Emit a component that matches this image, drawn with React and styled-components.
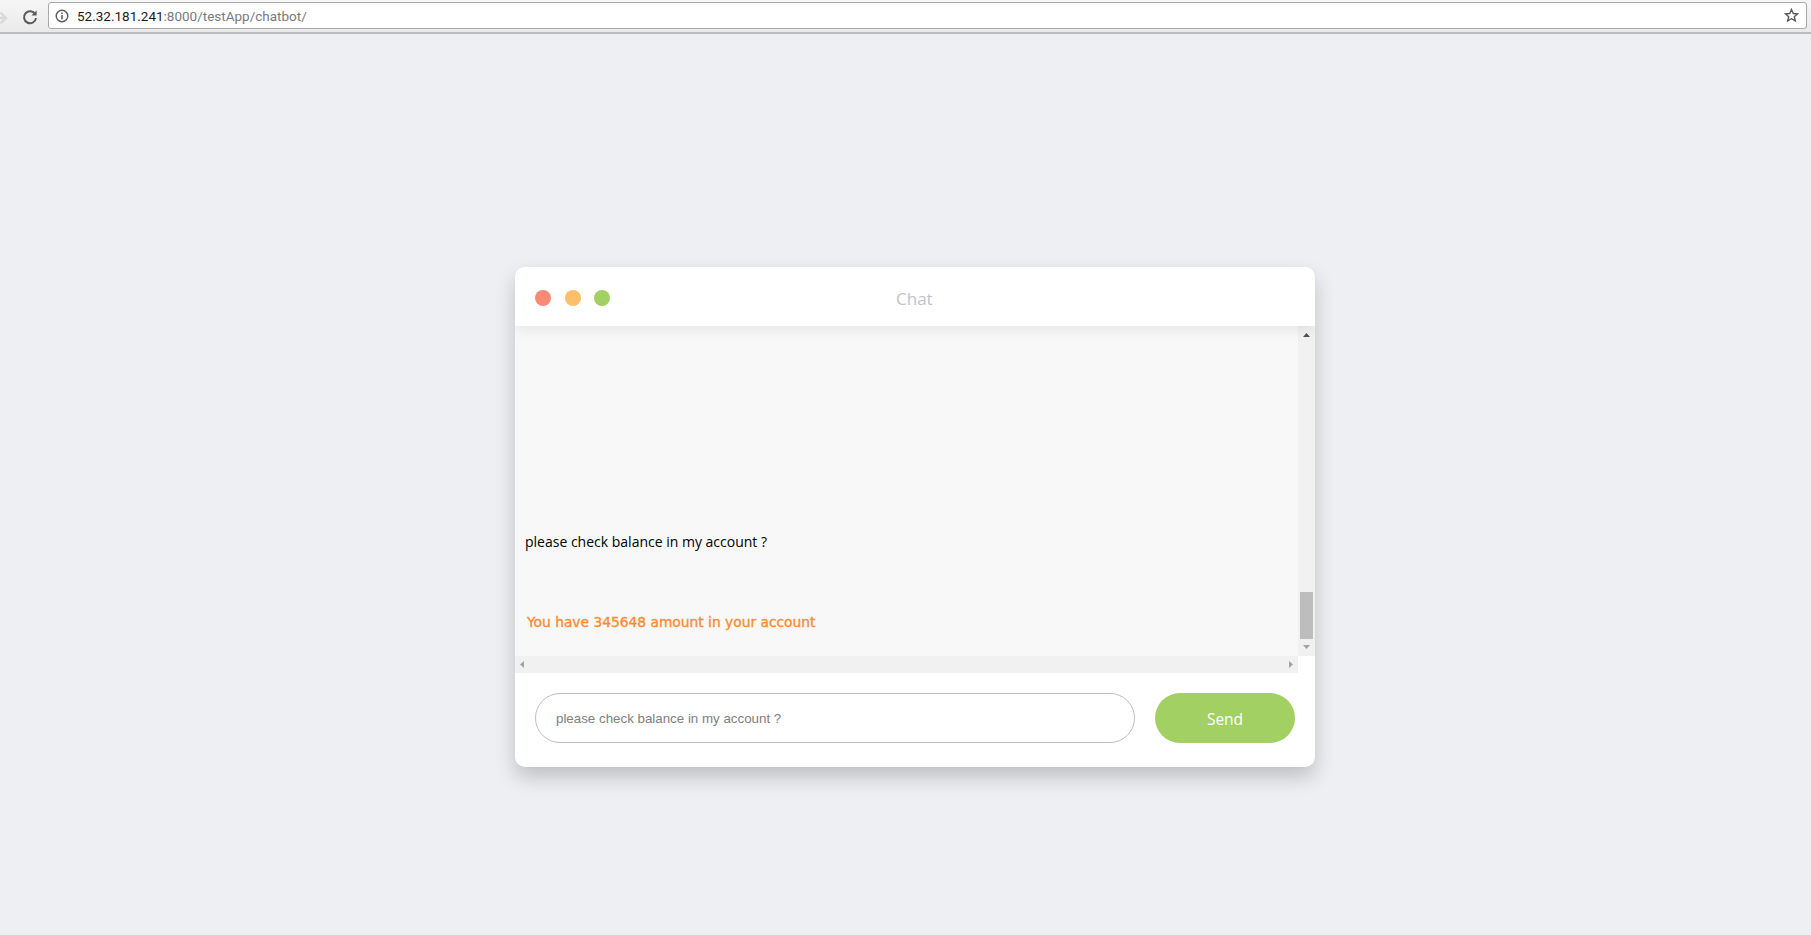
import React from "react";
import styled, { createGlobalStyle } from "styled-components";

const GlobalStyle = createGlobalStyle`
  html, body { margin: 0; padding: 0; background: #edeff2; }
  body { font-family: "Open Sans", sans-serif; overflow: hidden; }
`;

const Page = styled.div`
  width: 1811px;
  height: 935px;
  display: flex;
  flex-direction: column;
  background: #edeff2;
`;

const BrowserBar = styled.div`
  height: 34px;
  box-sizing: border-box;
  flex: none;
  display: flex;
  align-items: flex-start;
  padding: 2px 4px 0 0;
  background: linear-gradient(#f6f6f6, #eaeaea);
  border-bottom: 2px solid #bcbcbc;
`;

const NavIcon = styled.svg`
  flex: none;
  margin-top: ${(p) => p.$top || 0}px;
  margin-left: ${(p) => p.$left || 0}px;
`;

const AddressBox = styled.div`
  flex: 1;
  height: 27px;
  margin-left: 9px;
  box-sizing: border-box;
  display: flex;
  align-items: center;
  padding: 0 7px 0 6px;
  background: #fff;
  border: 1px solid #a9a9a9;
  border-radius: 3px;
`;

const Url = styled.div`
  flex: 1;
  margin-left: 8px;
  font-family: "Roboto", sans-serif;
  font-size: 13.5px;
  color: #7a7a7a;
  white-space: nowrap;
`;

const Host = styled.span`
  color: #1a1a1a;
`;

const Stage = styled.main`
  flex: 1;
  padding: 233px 0 0 515px;
`;

const ChatWindow = styled.section`
  width: 800px;
  height: 500px;
  display: flex;
  flex-direction: column;
  background: #fff;
  border-radius: 10px;
  overflow: hidden;
  box-shadow: 0 10px 20px rgba(0, 0, 0, 0.2);
`;

const TitleBar = styled.header`
  height: 59px;
  box-sizing: border-box;
  flex: none;
  position: relative;
  z-index: 1;
  display: flex;
  align-items: center;
  padding: 3px 20px 0;
  background: #fff;
  box-shadow: 0 1px 15px rgba(0, 0, 0, 0.1);
`;

const Dot = styled.span`
  width: 16px;
  height: 16px;
  border-radius: 50%;
  background: ${(p) => p.$color};
  margin-right: ${(p) => p.$gap}px;
`;

const Title = styled.h1`
  margin: 2px 0 0 286px;
  font-size: 17px;
  font-weight: 400;
  line-height: 20px;
  color: #c0c4ca;
`;

const ScrollGrid = styled.div`
  height: 347px;
  flex: none;
  display: grid;
  grid-template-columns: 783px 17px;
  grid-template-rows: 330px 17px;
`;

const Messages = styled.div`
  display: flex;
  flex-direction: column;
  justify-content: flex-end;
  padding: 0 0 24px 10px;
  background: #f8f8f8;
`;

const UserLine = styled.p`
  margin: 0 0 60px;
  font-size: 14px;
  line-height: 20px;
  color: #000;
`;

const BotLine = styled.p`
  margin: 0 0 0 2px;
  font-family: "DejaVu Sans", sans-serif;
  font-size: 13.8px;
  font-weight: 400;
  line-height: 20px;
  color: #ff8a2e;
  -webkit-text-stroke: 0.35px #ff8a2e;
`;

const VTrack = styled.div`
  display: flex;
  flex-direction: column;
  align-items: center;
  background: #f1f1f1;
`;

const HTrack = styled.div`
  display: flex;
  align-items: center;
  justify-content: space-between;
  padding: 0 5px;
  background: #f1f1f1;
`;

const Arrow = styled.svg`
  flex: none;
  display: block;
  margin-top: ${(p) => p.$top || 0}px;
  fill: ${(p) => p.$color};
`;

const Thumb = styled.div`
  width: 13px;
  height: 47px;
  margin-top: 255px;
  background: #bdbdbd;
`;

const Composer = styled.form`
  flex: 1;
  display: flex;
  align-items: flex-start;
  padding: 20px;
  gap: 20px;
`;

const MessageInput = styled.input`
  width: 600px;
  height: 50px;
  box-sizing: border-box;
  padding: 0 20px;
  border: 1px solid #bdbdbd;
  border-radius: 25px;
  outline: none;
  font-family: "Liberation Sans", sans-serif;
  font-size: 13.33px;
  background: #fff;
  &::placeholder {
    color: #808080;
    opacity: 1;
  }
`;

const SendButton = styled.button`
  width: 140px;
  height: 50px;
  padding: 2px 0 0;
  border: 0;
  border-radius: 25px;
  background: #a3d063;
  color: #fff;
  font-family: "Open Sans", sans-serif;
  font-size: 15.5px;
`;

export default function App() {
  return (
    <Page>
      <GlobalStyle />
      <BrowserBar>
        <NavIcon $top={8} $left={-8} width="16" height="16" viewBox="0 0 16 16" fill="none" stroke="#d9d9d9" strokeWidth="2.4">
          <path d="M1 8h13M8.5 2.5L14 8l-5.500 5.500" />
        </NavIcon>
        <NavIcon $top={6} $left={13} width="18" height="18" viewBox="0 0 18 18" fill="none">
          <path d="M14.200 6.200A6 6 0 1 0 15 10" stroke="#5a5a5a" strokeWidth="2" />
          <path d="M15.600 2.400v5.200h-5.200z" fill="#5a5a5a" />
        </NavIcon>
        <AddressBox>
          <svg width="14" height="14" viewBox="0 0 14 14" fill="none">
            <circle cx="7" cy="7" r="5.800" stroke="#5a5a5a" strokeWidth="1.400" />
            <path d="M7 6v4.200M7 3.600v1.400" stroke="#5a5a5a" strokeWidth="1.500" />
          </svg>
          <Url>
            <Host>52.32.181.241</Host>:8000/testApp/chatbot/
          </Url>
          <svg width="15" height="15" viewBox="0 0 15 15" fill="none">
            <path d="M7.500 1.500l1.800 4 4.200.4-3.200 2.800 1 4.200-3.800-2.200-3.800 2.200 1-4.200L1.500 5.900l4.200-.4z" stroke="#5a5a5a" strokeWidth="1.400" />
          </svg>
        </AddressBox>
      </BrowserBar>
      <Stage>
        <ChatWindow>
          <TitleBar>
            <Dot $color="#f98a73" $gap={14} />
            <Dot $color="#fdbf68" $gap={13} />
            <Dot $color="#a3d063" $gap={0} />
            <Title>Chat</Title>
          </TitleBar>
          <ScrollGrid>
            <Messages>
              <UserLine>please check balance in my account ?</UserLine>
              <BotLine>You have 345648 amount in your account</BotLine>
            </Messages>
            <VTrack>
              <Arrow $top={7} $color="#505050" width="7" height="4" viewBox="0 0 7 4">
                <path d="M3.500 0L7 4H0z" />
              </Arrow>
              <Thumb />
              <Arrow $top={6} $color="#a3a3a3" width="7" height="4" viewBox="0 0 7 4">
                <path d="M0 0h7L3.500 4z" />
              </Arrow>
            </VTrack>
            <HTrack>
              <Arrow $color="#a3a3a3" width="4" height="7" viewBox="0 0 4 7">
                <path d="M4 0v7L0 3.500z" />
              </Arrow>
              <Arrow $color="#a3a3a3" width="4" height="7" viewBox="0 0 4 7">
                <path d="M0 0v7l4-3.500z" />
              </Arrow>
            </HTrack>
          </ScrollGrid>
          <Composer onSubmit={(e) => e.preventDefault()}>
            <MessageInput placeholder="please check balance in my account ?" />
            <SendButton type="submit">Send</SendButton>
          </Composer>
        </ChatWindow>
      </Stage>
    </Page>
  );
}
